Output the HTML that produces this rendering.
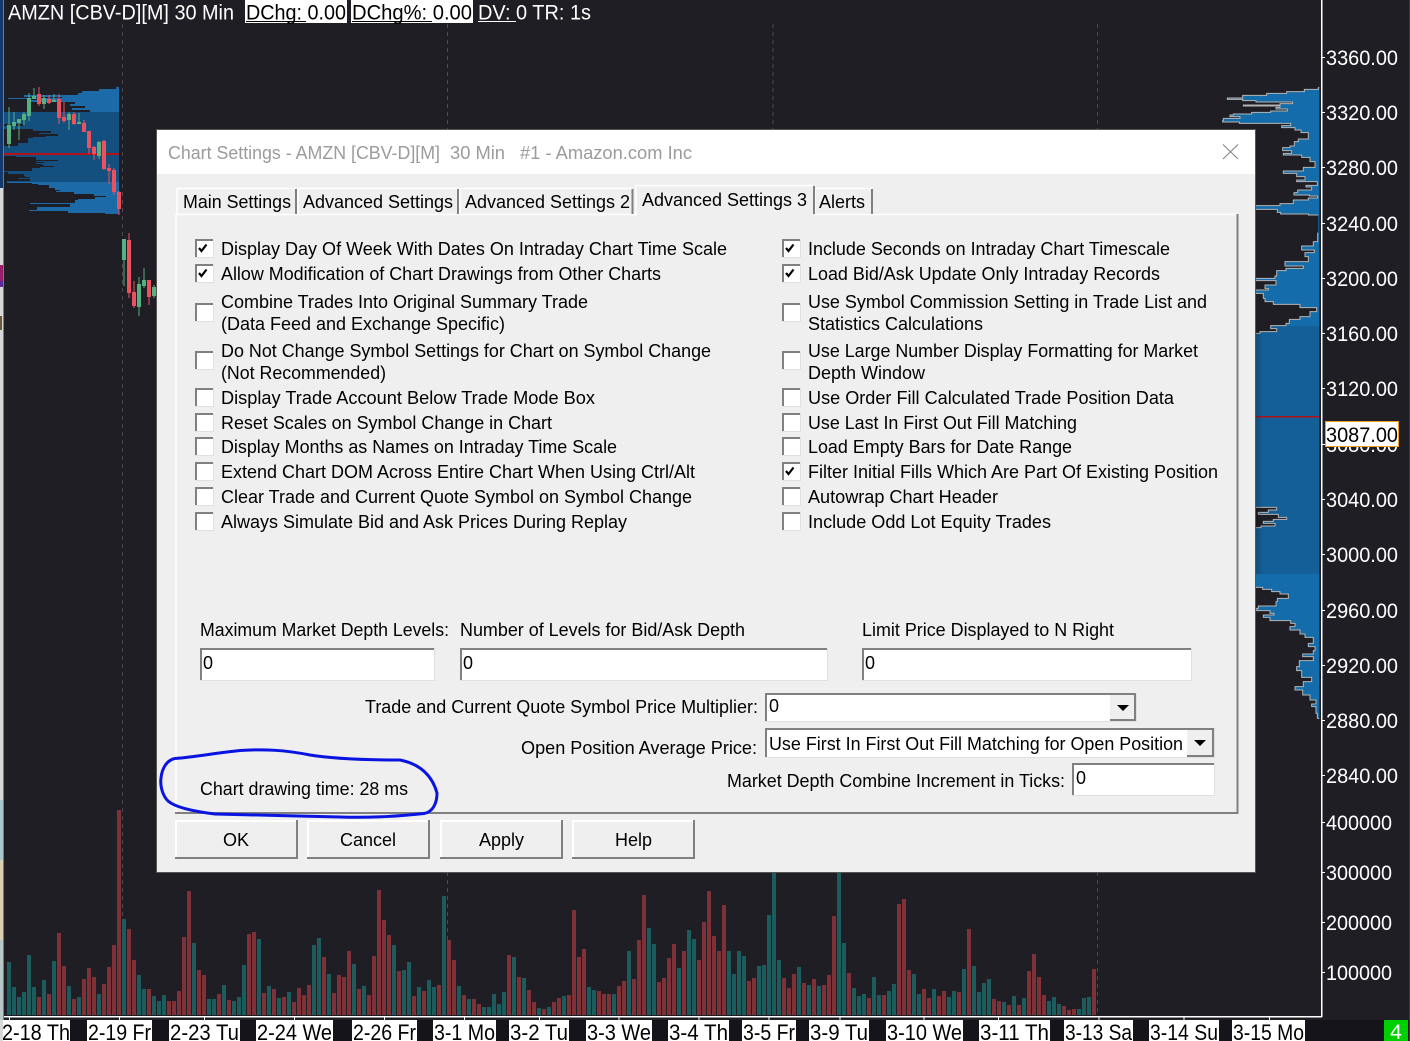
<!DOCTYPE html>
<html><head><meta charset="utf-8"><title>Chart Settings</title>
<style>
html,body{margin:0;padding:0;background:#1f1e24;overflow:hidden}
svg{display:block;font-family:"Liberation Sans",sans-serif}
text{white-space:pre}
.w{fill:#fff;font-size:21px}
.k{fill:#000;font-size:21px}
.dt{fill:#000;font-size:22px}
.d{fill:#000;font-size:18px}
.b{fill:#fff}
.t{fill:none;stroke:#808080;stroke-width:2}
.l{fill:none;stroke:#e0e0e0;stroke-width:1}
.c{fill:none;stroke:#000;stroke-width:2.2}
</style></head><body>
<svg xmlns="http://www.w3.org/2000/svg" width="1410" height="1041" viewBox="0 0 1410 1041">
<defs>
<clipPath id="lp"><path d="M119 87H116V89H99V91H82V93H78V95H24V97H62V98H8V99H40V100H30V102H75V104H70V106H85V108H72V110H90V112H4V124H23V126H4V129H33V131H51V133H39V134H58V136H46V137H33V138H28V143H18V146H4V156H16V157H36V160H58V161H36V162H44V163H36V164H42V165H44V166H54V167H40V168H32V171H4V172H8V174H24V176H25V177H30V178H18V179H30V181H7V183H32V184H38V185H49V188H55V190H60V191H56V192H74V194H94V196H106V197H95V199H78V200H75V203H30V204H70V207H37V210H29V211H68V213H105V214H119Z"/></clipPath>
<linearGradient id="rg" gradientUnits="userSpaceOnUse" x1="0" y1="0" x2="0" y2="2000">
<stop offset="0" stop-color="#146cab"/><stop offset=".399" stop-color="#146cab"/><stop offset=".399" stop-color="#145f97"/><stop offset=".771" stop-color="#145f97"/><stop offset=".771" stop-color="#146cab"/><stop offset="1" stop-color="#146cab"/>
</linearGradient>
<linearGradient id="sh" x1="0" y1="0" x2="1" y2="0"><stop offset="0" stop-color="#000" stop-opacity=".22"/><stop offset="1" stop-color="#000" stop-opacity="0"/></linearGradient>
</defs>

<rect width="1410" height="1041" fill="#1f1e24"/>
<rect y="1020" width="1410" height="21" fill="#15141a"/>

<!-- left screen edge -->
<rect x="0" y="0" width="3" height="188" fill="#123a6e"/>
<rect x="0" y="188" width="3" height="853" fill="#d8d8d8"/>
<rect x="0" y="265" width="3" height="16" fill="#9a1f6a"/>
<rect x="0" y="281" width="3" height="6" fill="#5a2a9a"/>
<rect x="0" y="316" width="2" height="14" fill="#6a5a3a"/>
<rect x="0" y="800" width="3" height="60" fill="#a8c8cc"/>
<rect x="0" y="860" width="3" height="80" fill="#d8d0b0"/>
<rect x="0" y="940" width="3" height="80" fill="#b8c8c8"/>
<rect x="3" y="0" width="1" height="1041" fill="#7a7a7a"/>
<rect x="1409" y="0" width="1" height="1041" fill="#2d3a55"/>

<!-- dashed day lines -->
<path d="M122.5 24V1015M447.5 24V1015M773 24V1015M1097.5 24V1015" stroke="#4a4a50" stroke-width="1" stroke-dasharray="4 4" fill="none"/>

<!-- left profile -->
<g clip-path="url(#lp)">
<rect x="4" y="87" width="115" height="25" fill="#1d6aa8"/>
<rect x="4" y="112" width="115" height="70" fill="#14507f"/>
<rect x="4" y="182" width="115" height="32" fill="#1d6aa8"/>
</g>
<rect x="4" y="153" width="115" height="2" fill="#b3101a"/>

<!-- candles -->
<g transform="translate(0,80) scale(1,.33333)">
<path fill="#56b080" d="M7 135h4v57h-4zM8.5 81h1v123h-1zM12 126h4v12h-4zM13.5 96h1v54h-1zM17 117h4v12h-4zM18.5 117h1v63h-1zM22 102h4v18h-4zM23.5 96h1v39h-1zM27 54h4v54h-4zM28.5 39h1v84h-1zM32 48h4v9h-4zM33.5 24h1v33h-1zM42 54h4v18h-4zM43.5 45h1v42h-1zM52 60h4v6h-4zM53.5 42h1v24h-1zM67 102h4v18h-4zM68.5 96h1v54h-1zM77 126h4v6h-4zM78.5 99h1v33h-1zM97 186h4v42h-4zM98.5 183h1v54h-1z"/>
<path fill="#ec5160" d="M37 42h4v30h-4zM38.5 21h1v57h-1zM47 57h4v12h-4zM48.5 45h1v27h-1zM57 57h4v57h-4zM58.5 42h1v90h-1zM62 111h4v12h-4zM63.5 66h1v63h-1zM72 102h4v30h-4zM73.5 96h1v39h-1zM82 129h4v27h-4zM83.5 120h1v36h-1zM87 153h4v51h-4zM88.5 153h1v69h-1zM92 201h4v21h-4zM93.5 198h1v42h-1zM102 183h4v84h-4zM103.5 180h1v90h-1zM107 264h4v9h-4zM108.5 252h1v60h-1zM112 270h4v66h-4zM113.5 264h1v81h-1zM117 336h4v51h-4zM118.5 333h1v72h-1z"/>
</g>
<g transform="translate(0,220) scale(1,.33333)">
<path fill="#56b080" d="M122 57h4v63h-4zM123.5 57h1v141h-1zM137 192h4v69h-4zM138.5 171h1v117h-1zM142 180h4v18h-4zM143.5 144h1v60h-1zM152 201h4v27h-4zM153.5 195h1v39h-1z"/>
<path fill="#ec5160" d="M127 60h4v159h-4zM128.5 39h1v195h-1zM132 216h4v42h-4zM133.5 183h1v81h-1zM147 180h4v51h-4zM148.5 180h1v75h-1z"/>
</g>

<!-- right profile -->
<g transform="translate(1200,60) scale(.33333)">
<path fill="url(#rg)" d="M358 83H355V88H313V95H260V100H200V106H128V114H82V118H128V122H168V126H278V131H240V135H130V138H240V142H228V147H262V153H212V157H155V162H100V165H90V170H120V175H70V182H68V186H118V190H272V197H245V203H285V210H303V218H325V237H295V245H283V258H270V263H248V272H275V280H250V285H305V292H330V305H345V316H345V322H310V333H250V340H290V350H315V360H290V365H352V376H318V381H335V390H293V398H282V405H328V408H353V414H325V420H280V431H240V437H165V448H232V457H242V462H325V465H355V518H353V545H340V558H305V570H343V578H315V590H325V605H255V618H310V625H258V632H230V648H225V655H165V662H228V675H195V685H205V690H165V700H190V715H195V725H220V733H300V743H350V755H330V770H300V778H268V790H258V797H212V806H230V815H180V820H-10V1342H230V1350H205V1357H175V1363H235V1372H260V1378H220V1384H190V1390H225V1398H183V1403H-10V1582H188V1588H215V1595H240V1602H265V1615H232V1625H228V1638H175V1645H170V1652H210V1660H222V1665H190V1672H210V1682H272V1690H285V1700H270V1710H300V1722H315V1732H340V1750H325V1760H345V1772H340V1782H308V1790H340V1802H298V1820H290V1832H305V1852H335V1865H310V1880H285V1890H308V1905H330V1920H348V1932H335V1940H348V1960H352V1975H358Z"/>
<path fill="none" stroke="#b4b4b4" stroke-width="3" d="M358 83H355V88H313V95H260V100H200V106H128V114H82V118H128V122H168V126H278V131H240V135H130V138H240V142H228V147H262V153H212V157H155V162H100V165H90V170H120V175H70V182H68V186H118V190H272V197H245V203H285V210H303V218H325V237H295V245H283V258H270V263H248V272H275V280H250V285H305V292H330V305H345V316H345V322H310V333H250V340H290V350H315V360H290V365H352V376H318V381H335V390H293V398H282V405H328V408H353V414H325V420H280V431H240V437H165V448H232V457H242V462H325V465H355M353 518V545H340V558H305V570H343V578H315V590H325V605H255V618H310V625H258V632H230V648H225V655H165V662H228V675H195V685H205V690H165V700H190V715H195V725H220V733H300V743H350V755H330V770H300V778H268V790H258V797H212V806H230V815H180V820H-10M-10 1342H230V1350H205V1357H175V1363H235V1372H260V1378H220V1384H190V1390H225V1398H183V1403H-10M-10 1582H188V1588H215V1595H240V1602H265V1615H232V1625H228V1638H175V1645H170V1652H210V1660H222V1665H190V1672H210V1682H272V1690H285V1700H270V1710H300V1722H315V1732H340V1750H325V1760H345V1772H340V1782H308V1790H340V1802H298V1820H290V1832H305V1852H335V1865H310V1880H285V1890H308V1905H330V1920H348V1932H335V1940H348V1960H352V1975H358"/>
</g>
<rect x="1255" y="416" width="64" height="1.5" fill="#b3101a"/>

<!-- volume bars -->
<path fill="none" stroke="#1c5c5c" stroke-width="4" d="M9 1015v-53M14 1015v-28M19 1015v-18M24 1015v-23M29 1015v-60M34 1015v-28M44 1015v-35M54 1015v-54M69 1015v-29M79 1015v-18M99 1015v-21M124 1015v-96M139 1015v-40M144 1015v-26M154 1015v-19M159 1015v-14M164 1015v-20M194 1015v-72M209 1015v-16M214 1015v-16M224 1015v-30M234 1015v-14M239 1015v-18M244 1015v-50M259 1015v-76M269 1015v-29M279 1015v-17M289 1015v-23M314 1015v-70M319 1015v-77M329 1015v-41M354 1015v-51M364 1015v-29M394 1015v-70M404 1015v-45M409 1015v-53M419 1015v-28M429 1015v-35M434 1015v-28M444 1015v-119M459 1015v-29M469 1015v-16M484 1015v-8M489 1015v-8M494 1015v-21M499 1015v-11M504 1015v-23M514 1015v-58M524 1015v-37M539 1015v-7M549 1015v-8M564 1015v-19M589 1015v-28M594 1015v-25M614 1015v-21M629 1015v-64M649 1015v-87M654 1015v-71M679 1015v-47M689 1015v-85M694 1015v-76M729 1015v-64M734 1015v-41M739 1015v-64M744 1015v-59M759 1015v-49M764 1015v-50M769 1015v-100M774 1015v-170M779 1015v-55M799 1015v-48M809 1015v-30M819 1015v-29M839 1015v-170M844 1015v-72M854 1015v-27M859 1015v-19M864 1015v-21M874 1015v-38M879 1015v-20M889 1015v-24M894 1015v-31M914 1015v-41M919 1015v-21M934 1015v-26M949 1015v-18M954 1015v-24M964 1015v-46M974 1015v-49M979 1015v-23M984 1015v-32M989 1015v-36M1004 1015v-13M1014 1015v-19M1024 1015v-17M1049 1015v-14M1054 1015v-18M1059 1015v-11M1079 1015v-6M1084 1015v-17M1089 1015v-18"/>
<path fill="none" stroke="#7e3136" stroke-width="4" d="M39 1015v-18M49 1015v-21M59 1015v-82M64 1015v-49M74 1015v-16M84 1015v-36M89 1015v-47M94 1015v-38M104 1015v-31M109 1015v-48M114 1015v-70M119 1015v-205M129 1015v-86M134 1015v-55M149 1015v-26M169 1015v-14M174 1015v-14M179 1015v-24M184 1015v-78M189 1015v-124M199 1015v-45M204 1015v-40M219 1015v-21M229 1015v-15M249 1015v-81M254 1015v-83M264 1015v-22M274 1015v-26M284 1015v-18M294 1015v-13M299 1015v-27M304 1015v-20M309 1015v-30M324 1015v-58M334 1015v-22M339 1015v-40M344 1015v-38M349 1015v-64M359 1015v-26M369 1015v-20M374 1015v-59M379 1015v-125M384 1015v-95M389 1015v-80M399 1015v-44M414 1015v-19M424 1015v-24M439 1015v-30M449 1015v-75M454 1015v-55M464 1015v-20M474 1015v-16M479 1015v-11M509 1015v-60M519 1015v-38M529 1015v-25M534 1015v-13M544 1015v-6M554 1015v-13M559 1015v-17M569 1015v-20M574 1015v-105M579 1015v-58M584 1015v-66M599 1015v-24M604 1015v-21M609 1015v-21M619 1015v-29M624 1015v-34M634 1015v-36M639 1015v-75M644 1015v-120M659 1015v-33M664 1015v-37M669 1015v-57M674 1015v-71M684 1015v-64M699 1015v-55M704 1015v-93M709 1015v-124M714 1015v-79M719 1015v-64M724 1015v-110M749 1015v-34M754 1015v-37M784 1015v-37M789 1015v-27M794 1015v-41M804 1015v-32M814 1015v-36M824 1015v-30M829 1015v-40M834 1015v-99M849 1015v-42M869 1015v-17M884 1015v-20M899 1015v-111M904 1015v-116M909 1015v-45M924 1015v-26M929 1015v-17M939 1015v-19M944 1015v-24M959 1015v-23M969 1015v-86M994 1015v-16M999 1015v-14M1009 1015v-10M1019 1015v-10M1029 1015v-44M1034 1015v-61M1039 1015v-38M1044 1015v-20M1064 1015v-9M1069 1015v-5M1074 1015v-6M1094 1015v-46"/>

<!-- axes -->
<rect x="4" y="1016" width="1318" height="1.5" fill="#fff"/>
<rect x="1321" y="0" width="1.5" height="1017" fill="#fff"/>
<path stroke="#fff" stroke-width="1" fill="none" d="M9.5 1017v3M119.5 1017v3M204.5 1017v3M294.5 1017v3M384.5 1017v3M464.5 1017v3M539.5 1017v3M619 1017v3M699 1017v3M769 1017v3M840 1017v3M924 1017v3M998.5 1017v3M1099 1017v3M1184 1017v3M1269.5 1017v3M1322 57.5h3M1322 112.5h3M1322 167.5h3M1322 223.5h3M1322 278.5h3M1322 333.5h3M1322 388.5h3M1322 444.5h3M1322 499.5h3M1322 554.5h3M1322 610.5h3M1322 665.5h3M1322 720.5h3M1322 775.5h3M1322 822.5h3M1322 872.5h3M1322 922.5h3M1322 972.5h3"/>

<!-- price labels -->
<g class="w">
<text class="w" x="1326" y="65" textLength="72" lengthAdjust="spacingAndGlyphs">3360.00</text>
<text class="w" x="1326" y="120" textLength="72" lengthAdjust="spacingAndGlyphs">3320.00</text>
<text class="w" x="1326" y="175" textLength="72" lengthAdjust="spacingAndGlyphs">3280.00</text>
<text class="w" x="1326" y="231" textLength="72" lengthAdjust="spacingAndGlyphs">3240.00</text>
<text class="w" x="1326" y="286" textLength="72" lengthAdjust="spacingAndGlyphs">3200.00</text>
<text class="w" x="1326" y="341" textLength="72" lengthAdjust="spacingAndGlyphs">3160.00</text>
<text class="w" x="1326" y="396" textLength="72" lengthAdjust="spacingAndGlyphs">3120.00</text>
<text class="w" x="1326" y="452" textLength="72" lengthAdjust="spacingAndGlyphs">3080.00</text>
<text class="w" x="1326" y="507" textLength="72" lengthAdjust="spacingAndGlyphs">3040.00</text>
<text class="w" x="1326" y="562" textLength="72" lengthAdjust="spacingAndGlyphs">3000.00</text>
<text class="w" x="1326" y="618" textLength="72" lengthAdjust="spacingAndGlyphs">2960.00</text>
<text class="w" x="1326" y="673" textLength="72" lengthAdjust="spacingAndGlyphs">2920.00</text>
<text class="w" x="1326" y="728" textLength="72" lengthAdjust="spacingAndGlyphs">2880.00</text>
<text class="w" x="1326" y="783" textLength="72" lengthAdjust="spacingAndGlyphs">2840.00</text>
<text class="w" x="1326" y="830" textLength="66" lengthAdjust="spacingAndGlyphs">400000</text>
<text class="w" x="1326" y="880" textLength="66" lengthAdjust="spacingAndGlyphs">300000</text>
<text class="w" x="1326" y="930" textLength="66" lengthAdjust="spacingAndGlyphs">200000</text>
<text class="w" x="1326" y="980" textLength="66" lengthAdjust="spacingAndGlyphs">100000</text>
</g>
<rect x="1325.5" y="421.5" width="73" height="25" fill="#fff" stroke="#f0a020" stroke-width="1"/>
<text class="k" x="1326" y="442" textLength="72" lengthAdjust="spacingAndGlyphs">3087.00</text>

<!-- date labels -->
<g fill="#fff">
<rect x="3" y="1020" width="67" height="21"/><rect x="87" y="1020" width="65" height="21"/><rect x="169" y="1020" width="71" height="21"/><rect x="256" y="1020" width="77" height="21"/><rect x="352" y="1020" width="65" height="21"/><rect x="433" y="1020" width="63" height="21"/><rect x="509" y="1020" width="60" height="21"/><rect x="586" y="1020" width="66" height="21"/><rect x="668" y="1020" width="61" height="21"/><rect x="742" y="1020" width="54" height="21"/><rect x="809" y="1020" width="60" height="21"/><rect x="886" y="1020" width="77" height="21"/><rect x="979" y="1020" width="71" height="21"/><rect x="1064" y="1020" width="69" height="21"/><rect x="1149" y="1020" width="70" height="21"/><rect x="1232" y="1020" width="73" height="21"/>
</g>
<text class="dt" x="2" y="1040" textLength="68" lengthAdjust="spacingAndGlyphs">2-18 Th</text>
<text class="dt" x="88" y="1040" textLength="63" lengthAdjust="spacingAndGlyphs">2-19 Fr</text>
<text class="dt" x="170" y="1040" textLength="69" lengthAdjust="spacingAndGlyphs">2-23 Tu</text>
<text class="dt" x="257" y="1040" textLength="75" lengthAdjust="spacingAndGlyphs">2-24 We</text>
<text class="dt" x="353" y="1040" textLength="63" lengthAdjust="spacingAndGlyphs">2-26 Fr</text>
<text class="dt" x="434" y="1040" textLength="61" lengthAdjust="spacingAndGlyphs">3-1 Mo</text>
<text class="dt" x="510" y="1040" textLength="58" lengthAdjust="spacingAndGlyphs">3-2 Tu</text>
<text class="dt" x="587" y="1040" textLength="64" lengthAdjust="spacingAndGlyphs">3-3 We</text>
<text class="dt" x="669" y="1040" textLength="59" lengthAdjust="spacingAndGlyphs">3-4 Th</text>
<text class="dt" x="743" y="1040" textLength="52" lengthAdjust="spacingAndGlyphs">3-5 Fr</text>
<text class="dt" x="810" y="1040" textLength="58" lengthAdjust="spacingAndGlyphs">3-9 Tu</text>
<text class="dt" x="887" y="1040" textLength="75" lengthAdjust="spacingAndGlyphs">3-10 We</text>
<text class="dt" x="980" y="1040" textLength="69" lengthAdjust="spacingAndGlyphs">3-11 Th</text>
<text class="dt" x="1065" y="1040" textLength="67" lengthAdjust="spacingAndGlyphs">3-13 Sa</text>
<text class="dt" x="1150" y="1040" textLength="68" lengthAdjust="spacingAndGlyphs">3-14 Su</text>
<text class="dt" x="1233" y="1040" textLength="71" lengthAdjust="spacingAndGlyphs">3-15 Mo</text>
<rect x="1384" y="1020" width="24" height="21" fill="#00d000"/>
<text class="w" x="1390" y="1039" textLength="12" lengthAdjust="spacingAndGlyphs">4</text>

<!-- header -->
<text class="w" x="8" y="19.5" textLength="226" lengthAdjust="spacingAndGlyphs">AMZN [CBV-D][M] 30 Min</text>
<rect x="245" y="0" width="102" height="23" fill="#fff"/>
<rect x="351" y="0" width="122" height="23" fill="#fff"/>
<text class="k" x="246" y="19.5" textLength="100" lengthAdjust="spacingAndGlyphs">DChg: 0.00</text>
<text class="k" x="352" y="19.5" textLength="120" lengthAdjust="spacingAndGlyphs">DChg%: 0.00</text>
<text class="w" x="478" y="19.5" textLength="113" lengthAdjust="spacingAndGlyphs">DV: 0 TR: 1s</text>
<rect x="246" y="21" width="60" height="1" fill="#000"/>
<rect x="352" y="21" width="80" height="1" fill="#000"/>
<rect x="478" y="21" width="38" height="1" fill="#fff"/>

<!-- dialog -->
<rect x="1255" y="333" width="8" height="241" fill="url(#sh)"/>
<rect x="156.5" y="129.5" width="1099" height="743" fill="#efefef" stroke="#555" stroke-width="1"/>
<rect x="157" y="130" width="1098" height="44" fill="#fff"/>
<text x="168" y="159" font-size="18" fill="#9b9b9b" textLength="272" lengthAdjust="spacingAndGlyphs">Chart Settings - AMZN [CBV-D][M]</text>
<text x="450" y="159" font-size="18" fill="#9b9b9b" textLength="55" lengthAdjust="spacingAndGlyphs">30 Min</text>
<text x="520" y="159" font-size="18" fill="#9b9b9b" textLength="172" lengthAdjust="spacingAndGlyphs">#1 - Amazon.com Inc</text>
<path d="M1223 144.5L1238 159M1238 144.5L1223 159" stroke="#808080" stroke-width="1" fill="none"/>

<!-- tab pane -->
<path fill="none" stroke="#fff" stroke-width="1.5" d="M176 813V214.5H1237"/>
<path fill="none" stroke="#808080" stroke-width="2" d="M1237.5 214V813H175"/>

<!-- tabs -->
<rect x="636" y="186" width="178" height="30" fill="#efefef"/>
<path fill="none" stroke="#fff" stroke-width="1.5" d="M177 214V188.5H296M298 214V188.5H458M460 214V188.5H632M636 216V185.5H813M815 214V188.5H872"/>
<path fill="none" stroke="#808080" stroke-width="2" d="M296 189V214M458 189V214M632.5 189V214M814 186V214M872 189V214"/>
<text class="d" x="183" y="208" textLength="108" lengthAdjust="spacingAndGlyphs">Main Settings</text>
<text class="d" x="303" y="208" textLength="150" lengthAdjust="spacingAndGlyphs">Advanced Settings</text>
<text class="d" x="465" y="208" textLength="165" lengthAdjust="spacingAndGlyphs">Advanced Settings 2</text>
<text class="d" x="642" y="206" textLength="165" lengthAdjust="spacingAndGlyphs">Advanced Settings 3</text>
<text class="d" x="819" y="208" textLength="46" lengthAdjust="spacingAndGlyphs">Alerts</text>

<!-- checkboxes left -->
<g transform="translate(195,239)"><rect class="b" width="18" height="18"/><path class="t" d="M1 18V1H18"/><path class="l" d="M.5 18.5H18.5V.5"/><path class="c" d="M4 9L6.5 12L11.5 5.5"/></g>
<g transform="translate(195,264)"><rect class="b" width="18" height="18"/><path class="t" d="M1 18V1H18"/><path class="l" d="M.5 18.5H18.5V.5"/><path class="c" d="M4 9L6.5 12L11.5 5.5"/></g>
<g transform="translate(195,303)"><rect class="b" width="18" height="18"/><path class="t" d="M1 18V1H18"/><path class="l" d="M.5 18.5H18.5V.5"/></g>
<g transform="translate(195,351)"><rect class="b" width="18" height="18"/><path class="t" d="M1 18V1H18"/><path class="l" d="M.5 18.5H18.5V.5"/></g>
<g transform="translate(195,388)"><rect class="b" width="18" height="18"/><path class="t" d="M1 18V1H18"/><path class="l" d="M.5 18.5H18.5V.5"/></g>
<g transform="translate(195,413)"><rect class="b" width="18" height="18"/><path class="t" d="M1 18V1H18"/><path class="l" d="M.5 18.5H18.5V.5"/></g>
<g transform="translate(195,437)"><rect class="b" width="18" height="18"/><path class="t" d="M1 18V1H18"/><path class="l" d="M.5 18.5H18.5V.5"/></g>
<g transform="translate(195,462)"><rect class="b" width="18" height="18"/><path class="t" d="M1 18V1H18"/><path class="l" d="M.5 18.5H18.5V.5"/></g>
<g transform="translate(195,487)"><rect class="b" width="18" height="18"/><path class="t" d="M1 18V1H18"/><path class="l" d="M.5 18.5H18.5V.5"/></g>
<g transform="translate(195,512)"><rect class="b" width="18" height="18"/><path class="t" d="M1 18V1H18"/><path class="l" d="M.5 18.5H18.5V.5"/></g>
<!-- checkboxes right -->
<g transform="translate(782,239)"><rect class="b" width="18" height="18"/><path class="t" d="M1 18V1H18"/><path class="l" d="M.5 18.5H18.5V.5"/><path class="c" d="M4 9L6.5 12L11.5 5.5"/></g>
<g transform="translate(782,264)"><rect class="b" width="18" height="18"/><path class="t" d="M1 18V1H18"/><path class="l" d="M.5 18.5H18.5V.5"/><path class="c" d="M4 9L6.5 12L11.5 5.5"/></g>
<g transform="translate(782,303)"><rect class="b" width="18" height="18"/><path class="t" d="M1 18V1H18"/><path class="l" d="M.5 18.5H18.5V.5"/></g>
<g transform="translate(782,351)"><rect class="b" width="18" height="18"/><path class="t" d="M1 18V1H18"/><path class="l" d="M.5 18.5H18.5V.5"/></g>
<g transform="translate(782,388)"><rect class="b" width="18" height="18"/><path class="t" d="M1 18V1H18"/><path class="l" d="M.5 18.5H18.5V.5"/></g>
<g transform="translate(782,413)"><rect class="b" width="18" height="18"/><path class="t" d="M1 18V1H18"/><path class="l" d="M.5 18.5H18.5V.5"/></g>
<g transform="translate(782,437)"><rect class="b" width="18" height="18"/><path class="t" d="M1 18V1H18"/><path class="l" d="M.5 18.5H18.5V.5"/></g>
<g transform="translate(782,462)"><rect class="b" width="18" height="18"/><path class="t" d="M1 18V1H18"/><path class="l" d="M.5 18.5H18.5V.5"/><path class="c" d="M4 9L6.5 12L11.5 5.5"/></g>
<g transform="translate(782,487)"><rect class="b" width="18" height="18"/><path class="t" d="M1 18V1H18"/><path class="l" d="M.5 18.5H18.5V.5"/></g>
<g transform="translate(782,512)"><rect class="b" width="18" height="18"/><path class="t" d="M1 18V1H18"/><path class="l" d="M.5 18.5H18.5V.5"/></g>

<!-- left column text -->
<text class="d" x="221" y="255" textLength="506" lengthAdjust="spacingAndGlyphs">Display Day Of Week With Dates On Intraday Chart Time Scale</text>
<text class="d" x="221" y="280" textLength="440" lengthAdjust="spacingAndGlyphs">Allow Modification of Chart Drawings from Other Charts</text>
<text class="d" x="221" y="308" textLength="367" lengthAdjust="spacingAndGlyphs">Combine Trades Into Original Summary Trade</text>
<text class="d" x="221" y="330" textLength="284" lengthAdjust="spacingAndGlyphs">(Data Feed and Exchange Specific)</text>
<text class="d" x="221" y="357" textLength="490" lengthAdjust="spacingAndGlyphs">Do Not Change Symbol Settings for Chart on Symbol Change</text>
<text class="d" x="221" y="379" textLength="165" lengthAdjust="spacingAndGlyphs">(Not Recommended)</text>
<text class="d" x="221" y="404" textLength="374" lengthAdjust="spacingAndGlyphs">Display Trade Account Below Trade Mode Box</text>
<text class="d" x="221" y="429" textLength="331" lengthAdjust="spacingAndGlyphs">Reset Scales on Symbol Change in Chart</text>
<text class="d" x="221" y="453" textLength="396" lengthAdjust="spacingAndGlyphs">Display Months as Names on Intraday Time Scale</text>
<text class="d" x="221" y="478" textLength="474" lengthAdjust="spacingAndGlyphs">Extend Chart DOM Across Entire Chart When Using Ctrl/Alt</text>
<text class="d" x="221" y="503" textLength="471" lengthAdjust="spacingAndGlyphs">Clear Trade and Current Quote Symbol on Symbol Change</text>
<text class="d" x="221" y="528" textLength="406" lengthAdjust="spacingAndGlyphs">Always Simulate Bid and Ask Prices During Replay</text>

<!-- right column text -->
<text class="d" x="808" y="255" textLength="362" lengthAdjust="spacingAndGlyphs">Include Seconds on Intraday Chart Timescale</text>
<text class="d" x="808" y="280" textLength="352" lengthAdjust="spacingAndGlyphs">Load Bid/Ask Update Only Intraday Records</text>
<text class="d" x="808" y="308" textLength="399" lengthAdjust="spacingAndGlyphs">Use Symbol Commission Setting in Trade List and</text>
<text class="d" x="808" y="330" textLength="175" lengthAdjust="spacingAndGlyphs">Statistics Calculations</text>
<text class="d" x="808" y="357" textLength="390" lengthAdjust="spacingAndGlyphs">Use Large Number Display Formatting for Market</text>
<text class="d" x="808" y="379" textLength="117" lengthAdjust="spacingAndGlyphs">Depth Window</text>
<text class="d" x="808" y="404" textLength="366" lengthAdjust="spacingAndGlyphs">Use Order Fill Calculated Trade Position Data</text>
<text class="d" x="808" y="429" textLength="269" lengthAdjust="spacingAndGlyphs">Use Last In First Out Fill Matching</text>
<text class="d" x="808" y="453" textLength="264" lengthAdjust="spacingAndGlyphs">Load Empty Bars for Date Range</text>
<text class="d" x="808" y="478" textLength="410" lengthAdjust="spacingAndGlyphs">Filter Initial Fills Which Are Part Of Existing Position</text>
<text class="d" x="808" y="503" textLength="190" lengthAdjust="spacingAndGlyphs">Autowrap Chart Header</text>
<text class="d" x="808" y="528" textLength="243" lengthAdjust="spacingAndGlyphs">Include Odd Lot Equity Trades</text>

<!-- fields row -->
<text class="d" x="200" y="636" textLength="249" lengthAdjust="spacingAndGlyphs">Maximum Market Depth Levels:</text>
<text class="d" x="460" y="636" textLength="285" lengthAdjust="spacingAndGlyphs">Number of Levels for Bid/Ask Depth</text>
<text class="d" x="862" y="636" textLength="252" lengthAdjust="spacingAndGlyphs">Limit Price Displayed to N Right</text>
<rect class="b" x="200" y="648" width="234" height="32"/><path class="t" d="M201 680V649H434"/><path class="l" d="M200 680.5H434.5V648"/>
<rect class="b" x="460" y="648" width="367" height="32"/><path class="t" d="M461 680V649H827"/><path class="l" d="M460 680.5H827.5V648"/>
<rect class="b" x="862" y="648" width="329" height="32"/><path class="t" d="M863 680V649H1191"/><path class="l" d="M862 680.5H1191.5V648"/>
<text class="d" x="203" y="669">0</text>
<text class="d" x="463" y="669">0</text>
<text class="d" x="865" y="669">0</text>

<!-- multiplier combo -->
<text class="d" x="365" y="713" textLength="393" lengthAdjust="spacingAndGlyphs">Trade and Current Quote Symbol Price Multiplier:</text>
<rect class="b" x="765" y="693" width="371" height="28"/>
<path class="t" d="M766 721V694H1135V720"/><path class="l" d="M765 721.5H1136.5V693"/>
<rect x="1110" y="695" width="24" height="25" fill="#efefef"/>
<path class="t" d="M1110 720H1135V695"/>
<path d="M1117 705H1129L1123 711Z" fill="#000"/>
<text class="d" x="769" y="712">0</text>

<!-- open position combo -->
<text class="d" x="521" y="754" textLength="236" lengthAdjust="spacingAndGlyphs">Open Position Average Price:</text>
<rect class="b" x="765" y="728" width="449" height="29"/>
<path class="t" d="M766 757V729H1213V756"/><path class="l" d="M765 757.5H1214.5V728"/>
<rect x="1187" y="730" width="25" height="25" fill="#efefef"/>
<path class="t" d="M1187 756H1213V730"/>
<path d="M1194 740H1206L1200 746Z" fill="#000"/>
<text class="d" x="769" y="750" textLength="414" lengthAdjust="spacingAndGlyphs">Use First In First Out Fill Matching for Open Position</text>

<!-- market depth -->
<text class="d" x="727" y="787" textLength="338" lengthAdjust="spacingAndGlyphs">Market Depth Combine Increment in Ticks:</text>
<rect class="b" x="1072" y="763" width="142" height="32"/><path class="t" d="M1073 795V764H1214"/><path class="l" d="M1072 795.5H1214.5V763"/>
<text class="d" x="1076" y="784">0</text>

<!-- drawing time -->
<text class="d" x="200" y="795" textLength="208" lengthAdjust="spacingAndGlyphs">Chart drawing time: 28 ms</text>
<path d="M175 758.5C195 757 215 753 240 750.5C265 749 285 750 310 755C335 759 365 760 400 760C420 764 432 775 437 793C437 803 433 812 424 813.5C400 816 375 818 340 817C300 816 255 815 215 814C190 811 175 807 168 801C162 795 160 785 161 778C162 768 167 760 175 758.5Z" fill="none" stroke="#0a14e0" stroke-width="3"/>

<!-- buttons -->
<g fill="none" stroke-width="2">
<path stroke="#fff" d="M176 858V821H297M308 858V821H429M441 858V821H562M573 858V821H694"/>
<path stroke="#808080" d="M175 858H297V820M307 858H429V820M440 858H562V820M572 858H694V820"/>
</g>
<text class="d" x="223" y="846" textLength="26" lengthAdjust="spacingAndGlyphs">OK</text>
<text class="d" x="340" y="846" textLength="56" lengthAdjust="spacingAndGlyphs">Cancel</text>
<text class="d" x="479" y="846" textLength="45" lengthAdjust="spacingAndGlyphs">Apply</text>
<text class="d" x="615" y="846" textLength="37" lengthAdjust="spacingAndGlyphs">Help</text>
</svg>
</body></html>
